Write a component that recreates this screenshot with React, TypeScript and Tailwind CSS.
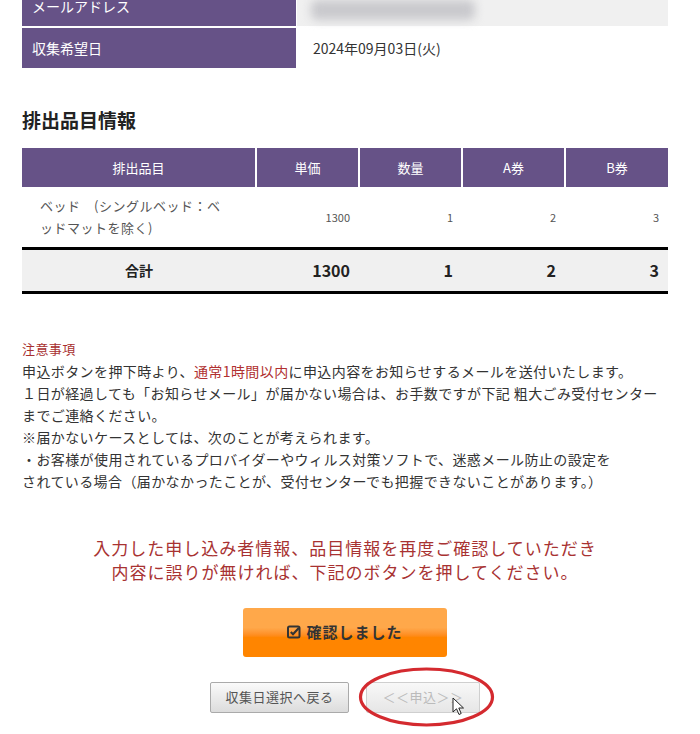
import React from "react";

const purple = "bg-[#665287]";

function CheckSquare() {
  return (
    <svg width="14" height="14" viewBox="0 0 14 14" className="mr-[5px]">
      <rect x="1" y="1.5" width="11.5" height="11" rx="1.5" fill="none" stroke="#333" strokeWidth="2" />
      <path d="M3.8 7 L6 9.2 L11.8 3" fill="none" stroke="#333" strokeWidth="2.2" />
    </svg>
  );
}

function Cursor() {
  return (
    <svg width="13" height="19" viewBox="0 0 13 19" className="absolute left-[86px] top-[15px]">
      <path d="M1 1 L1 15 L4.5 11.8 L7 17.5 L9.2 16.5 L6.8 11 L11.5 11 Z" fill="#fff" stroke="#222" strokeWidth="1" strokeLinejoin="round" />
    </svg>
  );
}

export default function App() {
  return (
    <div className="w-[700px] h-[734px] overflow-hidden bg-white font-['Noto_Sans_CJK_JP','Noto_Sans',sans-serif] text-[#333]">
      <div className="mx-[22px] w-[646px]">
        {/* Applicant info (tail) */}
        <div className="-mt-[14px] flex flex-col gap-[2px]">
          <div className="flex h-[40px]">
            <div className={`${purple} w-[274px] flex items-center pl-[10px] text-[14px] text-white`}>
              メールアドレス
            </div>
            <div className="flex-1 ml-[1px] bg-[#f0f0f0] flex items-center pl-[14px] pt-[8px]">
              <div className="w-[164px] h-[20px] bg-[#c9c9cd] rounded-md blur-[5px]" />
            </div>
          </div>
          <div className="flex h-[40px]">
            <div className={`${purple} w-[274px] flex items-center pl-[10px] text-[14px] text-white`}>
              収集希望日
            </div>
            <div className="flex-1 ml-[1px] flex items-center pl-[16px] text-[14px] text-[#333]">
              2024年09月03日(火)
            </div>
          </div>
        </div>

        {/* Items */}
        <h2 className="mt-[38px] text-[19px] leading-[28px] font-bold text-[#222]">排出品目情報</h2>
        <table className="mt-[14px] w-[646px] table-fixed border-collapse">
          <colgroup>
            <col className="w-[234px]" />
            <col className="w-[103px]" />
            <col className="w-[103px]" />
            <col className="w-[103px]" />
            <col className="w-[103px]" />
          </colgroup>
          <thead>
            <tr className={`${purple} h-[39px] text-[13px] text-white`}>
              <th className="font-normal">排出品目</th>
              <th className="font-normal border-l-2 border-white">単価</th>
              <th className="font-normal border-l-2 border-white">数量</th>
              <th className="font-normal border-l-2 border-white">A券</th>
              <th className="font-normal border-l-2 border-white">B券</th>
            </tr>
          </thead>
          <tbody>
            <tr className="h-[61px] text-[#555]">
              <td className="pl-[18px] text-[13px] leading-[22px] tracking-[0.5px]">
                ベッド　(シングルベッド：ベ
                <br />
                ッドマットを除く)
              </td>
              <td className="text-right pr-[9px] text-[11px]">1300</td>
              <td className="text-right pr-[9px] text-[11px]">1</td>
              <td className="text-right pr-[9px] text-[11px]">2</td>
              <td className="text-right pr-[9px] text-[11px]">3</td>
            </tr>
            <tr className="h-[44px] bg-[#f0f0f0] border-y-[3px] border-black font-bold text-[#222]">
              <td className="text-center text-[14px]">合計</td>
              <td className="text-right pr-[9px] text-[16px]">1300</td>
              <td className="text-right pr-[9px] text-[16px]">1</td>
              <td className="text-right pr-[9px] text-[16px]">2</td>
              <td className="text-right pr-[9px] text-[16px]">3</td>
            </tr>
          </tbody>
        </table>

        {/* Notes */}
        <div className="mt-[44px] text-[14px] leading-[22px] tracking-[0.4px] text-[#333] whitespace-nowrap">
          <p className="text-[#a8302f] text-[13px]">注意事項</p>
          <p>
            申込ボタンを押下時より、<span className="text-[#b03030]">通常1時間以内</span>に申込内容をお知らせするメールを送付いたします。
          </p>
          <p>１日が経過しても「お知らせメール」が届かない場合は、お手数ですが下記 粗大ごみ受付センター</p>
          <p>までご連絡ください。</p>
          <p>※届かないケースとしては、次のことが考えられます。</p>
          <p>・お客様が使用されているプロバイダーやウィルス対策ソフトで、迷惑メール防止の設定を</p>
          <p>されている場合（届かなかったことが、受付センターでも把握できないことがあります。）</p>
        </div>

        {/* Confirm message */}
        <div className="mt-[44px] text-center text-[17px] leading-[24px] tracking-[1px] text-[#a83232]">
          <p>入力した申し込み者情報、品目情報を再度ご確認していただき</p>
          <p>内容に誤りが無ければ、下記のボタンを押してください。</p>
        </div>

        <div className="mt-[24px] flex justify-center">
          <button className="w-[204px] h-[49px] rounded-[3px] bg-linear-to-b from-[#ffa84a] from-40% to-[#ff8500] to-60% flex items-center justify-center text-[15px] font-bold tracking-[1px] text-[#333]">
            <CheckSquare />
            確認しました
          </button>
        </div>

        <div className="mt-[25px] flex justify-center gap-[17px]">
          <button className="w-[139px] h-[31px] rounded-[2px] border border-[#aaa] bg-linear-to-b from-[#fafafa] to-[#dcdcdc] text-[13px] text-[#555] tracking-[0.5px]">
            収集日選択へ戻る
          </button>
          <div className="relative">
            <button disabled className="w-[114px] h-[31px] rounded-[2px] border border-[#cfcfcf] bg-linear-to-b from-[#f8f8f8] to-[#e6e6e6] text-[13px] text-[#bbb] tracking-[0.5px]">
              ＜＜申込＞＞
            </button>
            <svg width="139" height="62" viewBox="0 0 139 62" className="absolute -left-[9px] -top-[16px] pointer-events-none">
              <ellipse cx="69.5" cy="31" rx="66" ry="28" fill="none" stroke="#d42a2f" strokeWidth="3.2" />
            </svg>
            <Cursor />
          </div>
        </div>
      </div>
    </div>
  );
}
